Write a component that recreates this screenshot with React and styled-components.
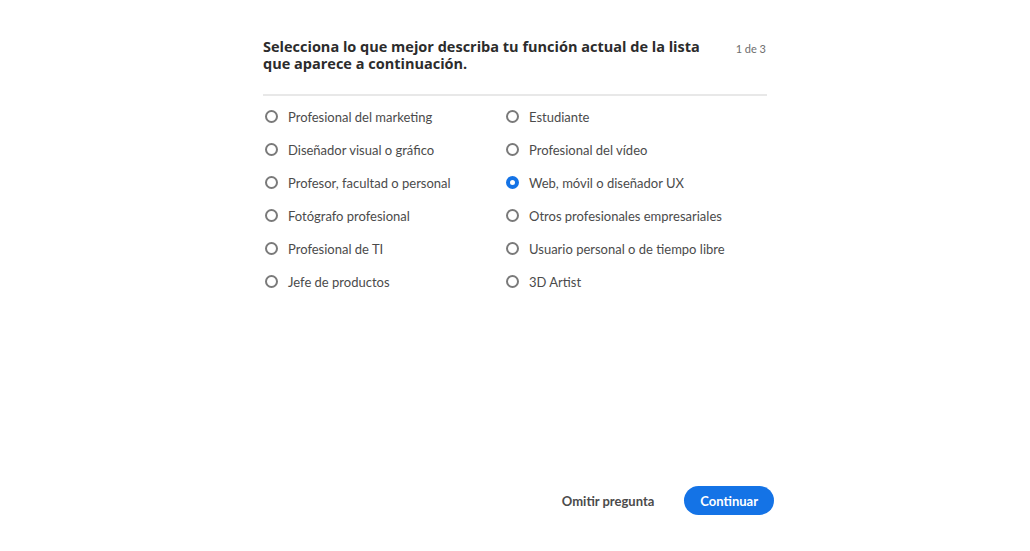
import styled, { createGlobalStyle } from 'styled-components';

const GlobalStyle = createGlobalStyle`
  html, body {
    margin: 0;
    padding: 0;
    background: #ffffff;
  }
  body {
    font-family: Lato, "Open Sans", "Liberation Sans", sans-serif;
  }
`;

const Page = styled.div`
  height: 551px;
  display: flex;
  flex-direction: column;
  width: 504px;
  margin: 0 auto;
  padding: 38px 0 36px;
  box-sizing: border-box;
`;

const Header = styled.div`
  display: flex;
  justify-content: space-between;
  align-items: flex-start;
  gap: 24px;
  padding-bottom: 22px;
  border-bottom: 2px solid #e8e8e8;
`;

const Title = styled.h1`
  margin: 0;
  font-family: "Open Sans", Lato, sans-serif;
  font-size: 14.5px;
  line-height: 17px;
  font-weight: 700;
  color: #2c2c2c;
  max-width: 450px;
`;

const Step = styled.span`
  font-size: 11px;
  color: #6e6e6e;
  margin-top: 4px;
  margin-right: 1px;
  white-space: nowrap;
`;

const Options = styled.div`
  display: grid;
  grid-template-columns: 241px 1fr;
  grid-auto-flow: column;
  grid-template-rows: repeat(6, 33px);
  padding-top: 4px;
`;

const Option = styled.label`
  display: flex;
  align-items: center;
  gap: 10px;
  padding-left: 2px;
  font-size: 13px;
  color: #4b4b4b;
  cursor: pointer;
`;

const Radio = styled.span`
  width: 13px;
  height: 13px;
  border-radius: 50%;
  box-sizing: border-box;
  flex-shrink: 0;
  border: ${(p) => (p.$checked ? '4px solid #1473e6' : '2px solid #7a7a7a')};
  background: #ffffff;
`;

const Footer = styled.div`
  margin-top: auto;
  margin-right: -7px;
  display: flex;
  justify-content: flex-end;
  align-items: center;
  gap: 30px;
`;

const TextButton = styled.button`
  border: none;
  background: none;
  padding: 0;
  font-family: inherit;
  font-size: 13px;
  font-weight: 700;
  color: #4b4b4b;
  cursor: pointer;
`;

const PrimaryButton = styled.button`
  height: 29px;
  padding: 0 16px;
  border: none;
  border-radius: 15px;
  background: #1473e6;
  color: #ffffff;
  font-family: inherit;
  font-size: 13px;
  font-weight: 700;
  cursor: pointer;
`;

const left = [
  'Profesional del marketing',
  'Diseñador visual o gráfico',
  'Profesor, facultad o personal',
  'Fotógrafo profesional',
  'Profesional de TI',
  'Jefe de productos',
];

const right = [
  'Estudiante',
  'Profesional del vídeo',
  'Web, móvil o diseñador UX',
  'Otros profesionales empresariales',
  'Usuario personal o de tiempo libre',
  '3D Artist',
];

export default function App() {
  const selected = 'Web, móvil o diseñador UX';
  return (
    <>
      <GlobalStyle />
      <Page>
        <Header>
          <Title>
            Selecciona lo que mejor describa tu función actual de la lista que
            aparece a continuación.
          </Title>
          <Step>1 de 3</Step>
        </Header>
        <Options>
          {[...left, ...right].map((label) => (
            <Option key={label}>
              <Radio $checked={label === selected} />
              {label}
            </Option>
          ))}
        </Options>
        <Footer>
          <TextButton type="button">Omitir pregunta</TextButton>
          <PrimaryButton type="button">Continuar</PrimaryButton>
        </Footer>
      </Page>
    </>
  );
}
